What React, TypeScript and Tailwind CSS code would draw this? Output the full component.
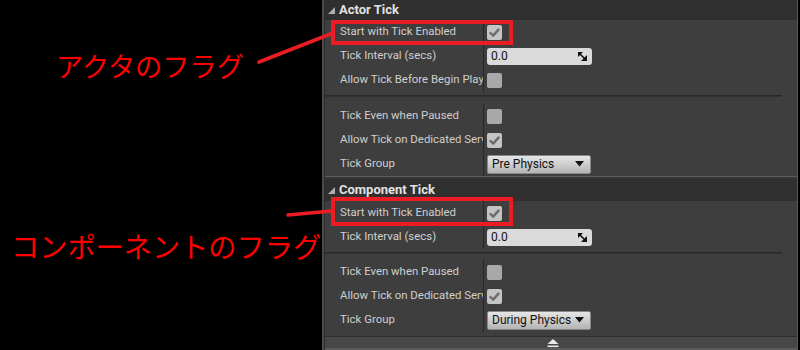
import React from "react";

const labelFont = { fontFamily: "Roboto, 'Liberation Sans', sans-serif" };

function Check({ checked }: { checked: boolean }) {
  return (
    <div className={`w-[15px] h-[15px] rounded-[2px] flex items-center justify-center ${checked ? "bg-[#c4c4c4]" : "bg-[#a9a9a9]"}`}>
      {checked && (
        <svg width="11" height="11" viewBox="0 0 11 11">
          <path d="M1.5 6 L4.2 8.6 L9.5 2.6" stroke="#6b6b6b" strokeWidth="2.4" fill="none" strokeLinecap="round" strokeLinejoin="round" />
        </svg>
      )}
    </div>
  );
}

function NumInput() {
  return (
    <div className="w-[105px] h-[17px] rounded-[3px] bg-[#dadada] flex items-center justify-between pl-[4px] pr-[5px] text-[12px] text-[#111]">
      <span>0.0</span>
      <svg width="9" height="9" viewBox="0 0 9 9">
        <path d="M0 0 H5 L0 5 Z" fill="#111" />
        <path d="M9 9 H3 L9 3 Z" fill="#111" />
        <path d="M1 1 L8 8" stroke="#111" strokeWidth="1.6" />
      </svg>
    </div>
  );
}

function Combo({ text }: { text: string }) {
  return (
    <div className="w-[104px] h-[19px] rounded-[2px] border border-[#888] bg-gradient-to-b from-[#e6e6e6] to-[#b4b4b4] flex items-center justify-between pl-[4px] pr-[6px] text-[12px] text-[#111]">
      <span>{text}</span>
      <svg width="9" height="6" viewBox="0 0 9 6">
        <path d="M0 0 H9 L4.5 5.5 Z" fill="#111" />
      </svg>
    </div>
  );
}

function Row({ label, children, h = "h-[24px]" }: { label: string; children: React.ReactNode; h?: string }) {
  return (
    <div className={`flex ${h}`}>
      <div className="w-[159px] shrink-0 overflow-hidden whitespace-nowrap pl-[15px] flex items-center text-[11.4px] text-[#cfcfcf] border-r border-[#262626]">
        {label}
      </div>
      <div className="flex items-center pl-[3px]">{children}</div>
    </div>
  );
}

function Sep({ h }: { h: string }) {
  return (
    <div className={`${h} pt-[3px] pr-[15px]`}>
      <div className="h-[2px] bg-gradient-to-b from-[#252525] to-[#353535]" />
    </div>
  );
}

function Header({ title, h }: { title: string; h: string }) {
  return (
    <div className={`${h} bg-[#2f2f2f] rounded-tl-[3px] flex items-center pl-[3px] gap-[4px]`}>
      <svg width="7" height="7" viewBox="0 0 7 7">
        <path d="M7 0 V7 H0 Z" fill="#b0b0b0" />
      </svg>
      <span className="text-[13px] font-bold text-[#e2e2e2]">{title}</span>
    </div>
  );
}

export default function App() {
  return (
    <div className="relative w-[800px] h-[350px] bg-black overflow-hidden flex" style={labelFont}>
      <div className="w-[322px] shrink-0" />
      <div className="w-[2px] bg-[#4b4b4b]" />
      <div className="w-[1px] bg-[#2a2a2a]" />
      <div className="w-[472px] flex flex-col bg-[#3e3e3e]">
        <Header title="Actor Tick" h="h-[20px]" />
        <Row label="Start with Tick Enabled"><Check checked /></Row>
        <Row label="Tick Interval (secs)"><NumInput /></Row>
        <Row label="Allow Tick Before Begin Play"><Check checked={false} /></Row>
        <Sep h="h-[12px]" />
        <Row label="Tick Even when Paused"><Check checked={false} /></Row>
        <Row label="Allow Tick on Dedicated Server"><Check checked /></Row>
        <Row label="Tick Group"><Combo text="Pre Physics" /></Row>
        <div className="h-[1px] bg-[#5c5c5c]" />
        <div className="h-[2px] bg-[#353535]" />
        <Header title="Component Tick" h="h-[22px]" />
        <Row label="Start with Tick Enabled"><Check checked /></Row>
        <Row label="Tick Interval (secs)"><NumInput /></Row>
        <Sep h="h-[11px]" />
        <Row label="Tick Even when Paused"><Check checked={false} /></Row>
        <Row label="Allow Tick on Dedicated Server"><Check checked /></Row>
        <Row label="Tick Group"><Combo text="During Physics" /></Row>
        <div className="h-[4px]" />
        <div className="h-[1px] bg-[#2e2e2e]" />
        <div className="flex-1 bg-[#474747] flex justify-center pt-[2px] pr-[16px]">
          <svg width="12" height="9" viewBox="0 0 12 9">
            <path d="M6 0 L11.5 5 H0.5 Z" fill="#e8e8e8" />
            <rect x="0.5" y="6.5" width="11" height="1.6" fill="#e8e8e8" />
          </svg>
        </div>
        <div className="h-[2px] bg-[#5a5a5a]" />
      </div>
      <div className="w-[1px] bg-[#5a5a5a]" />
      <div className="w-[2px]" />

      {/* annotations */}
      <div className="absolute left-[331px] top-[20px] w-[182px] h-[25px] border-[4px] border-[#ec1c24]" />
      <div className="absolute left-[331px] top-[197px] w-[182px] h-[29px] border-[4px] border-[#ec1c24]" />
      <svg className="absolute left-0 top-0" width="800" height="350" viewBox="0 0 800 350">
        <line x1="259" y1="62" x2="333" y2="33" stroke="#ec1c24" strokeWidth="3.5" strokeLinecap="round" />
        <line x1="288" y1="215" x2="332" y2="211" stroke="#ec1c24" strokeWidth="3.5" strokeLinecap="round" />
      </svg>
      <div
        className="absolute left-[56px] top-[45px] text-[27.2px] leading-[40px] text-[#ff0000] whitespace-nowrap"
        style={{ fontFamily: "'Noto Sans CJK JP', sans-serif", fontWeight: 400 }}
      >
        アクタのフラグ
      </div>
      <div
        className="absolute left-[11px] top-[225px] text-[28.2px] leading-[42px] text-[#ff0000] whitespace-nowrap"
        style={{ fontFamily: "'Noto Sans CJK JP', sans-serif", fontWeight: 400 }}
      >
        コンポーネントのフラグ
      </div>
    </div>
  );
}
